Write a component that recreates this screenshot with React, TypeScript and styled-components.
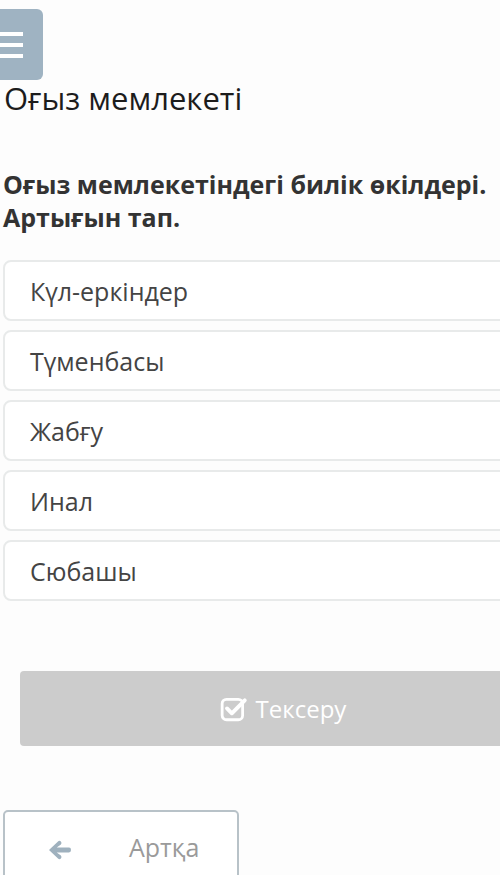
import React from 'react';
import styled, { createGlobalStyle } from 'styled-components';

const GlobalStyle = createGlobalStyle`
  html, body {
    margin: 0;
    padding: 0;
    background: #fdfdfd;
    overflow: hidden;
  }
  body {
    font-family: "Open Sans", "Noto Sans", sans-serif;
  }
`;

const options = ['Күл-еркіндер', 'Түменбасы', 'Жабғу', 'Инал', 'Сюбашы'];

const App = () => {
  return (
    <>
      <GlobalStyle />
      <Page>
        <MenuButton aria-label="menu">
          <MenuLine />
          <MenuLine />
          <MenuLine />
        </MenuButton>
        <Title>Оғыз мемлекеті</Title>
        <Question>
          Оғыз мемлекетіндегі билік өкілдері.
          <br />
          Артығын тап.
        </Question>
        <OptionList>
          {options.map(option => (
            <Option key={option}>{option}</Option>
          ))}
        </OptionList>
        <CheckButton disabled>
          <CheckIcon />
          Тексеру
        </CheckButton>
        <BackButton>
          <ArrowIcon />
          <BackLabel>Артқа</BackLabel>
        </BackButton>
      </Page>
    </>
  );
};

const CheckIcon = () => (
  <svg width="28" height="26" viewBox="0 0 26 24" fill="none">
    <rect x="2" y="3" width="19" height="19" rx="4" stroke="#fff" strokeWidth="2.6" />
    <path d="M6.5 11.5 L11 16 L23 4" stroke="#fff" strokeWidth="3.6" strokeLinecap="round" strokeLinejoin="round" />
  </svg>
);

const ArrowIcon = () => (
  <svg width="25" height="22" viewBox="0 0 24 22">
    <path
      d="M1.5 11 L10.5 2.5 Q12 1.2 13.4 2.6 Q14.7 4 13.4 5.4 L9.2 8.6 L21.5 8.6 Q23.5 8.6 23.5 11 Q23.5 13.4 21.5 13.4 L9.2 13.4 L13.4 16.6 Q14.7 18 13.4 19.4 Q12 20.8 10.5 19.5 Z"
      fill="#9fb1be"
    />
  </svg>
);

const Page = styled.div`
  width: 560px;
  display: flex;
  flex-direction: column;
  align-items: flex-start;
  padding-top: 9px;
`;

const MenuButton = styled.button`
  width: 60px;
  height: 71px;
  margin-left: -17px;
  border: none;
  border-radius: 6px;
  background: #9fb3c2;
  display: flex;
  flex-direction: column;
  justify-content: center;
  gap: 7px;
  padding: 0;
`;

const MenuLine = styled.span`
  display: block;
  width: 40px;
  height: 4px;
  background: #fff;
`;

const Title = styled.h1`
  margin: 0 0 0 4px;
  font-size: 31px;
  font-weight: 400;
  line-height: 36px;
  color: #1c1c1c;
`;

const Question = styled.h2`
  margin: 52px 0 0 3px;
  font-size: 25px;
  font-weight: 700;
  line-height: 33px;
  color: #333;
`;

const OptionList = styled.div`
  margin: 26px 0 0 3px;
  width: 557px;
  display: flex;
  flex-direction: column;
  gap: 9px;
`;

const Option = styled.div`
  box-sizing: border-box;
  height: 61px;
  padding-left: 25px;
  display: flex;
  align-items: center;
  border: 2px solid #e8eaea;
  border-radius: 8px;
  background: #fff;
  font-size: 25px;
  color: #444;
`;

const CheckButton = styled.button`
  margin: 70px 0 0 20px;
  width: 526px;
  height: 75px;
  border: none;
  border-radius: 4px;
  background: #cccccc;
  color: #fff;
  font-family: "Open Sans", "Noto Sans", sans-serif;
  font-size: 24px;
  display: flex;
  align-items: center;
  justify-content: center;
  gap: 8px;
`;

const BackButton = styled.button`
  margin: 64px 0 0 3px;
  box-sizing: border-box;
  width: 236px;
  height: 80px;
  border: 2px solid #b8c2c8;
  border-radius: 5px;
  background: #fff;
  display: flex;
  align-items: flex-start;
  padding: 27px 0 0 42px;
  font-family: "Open Sans", "Noto Sans", sans-serif;
`;

const BackLabel = styled.span`
  margin-left: 57px;
  margin-top: -9px;
  font-size: 25px;
  color: #9a9a9a;
`;

export default App;
